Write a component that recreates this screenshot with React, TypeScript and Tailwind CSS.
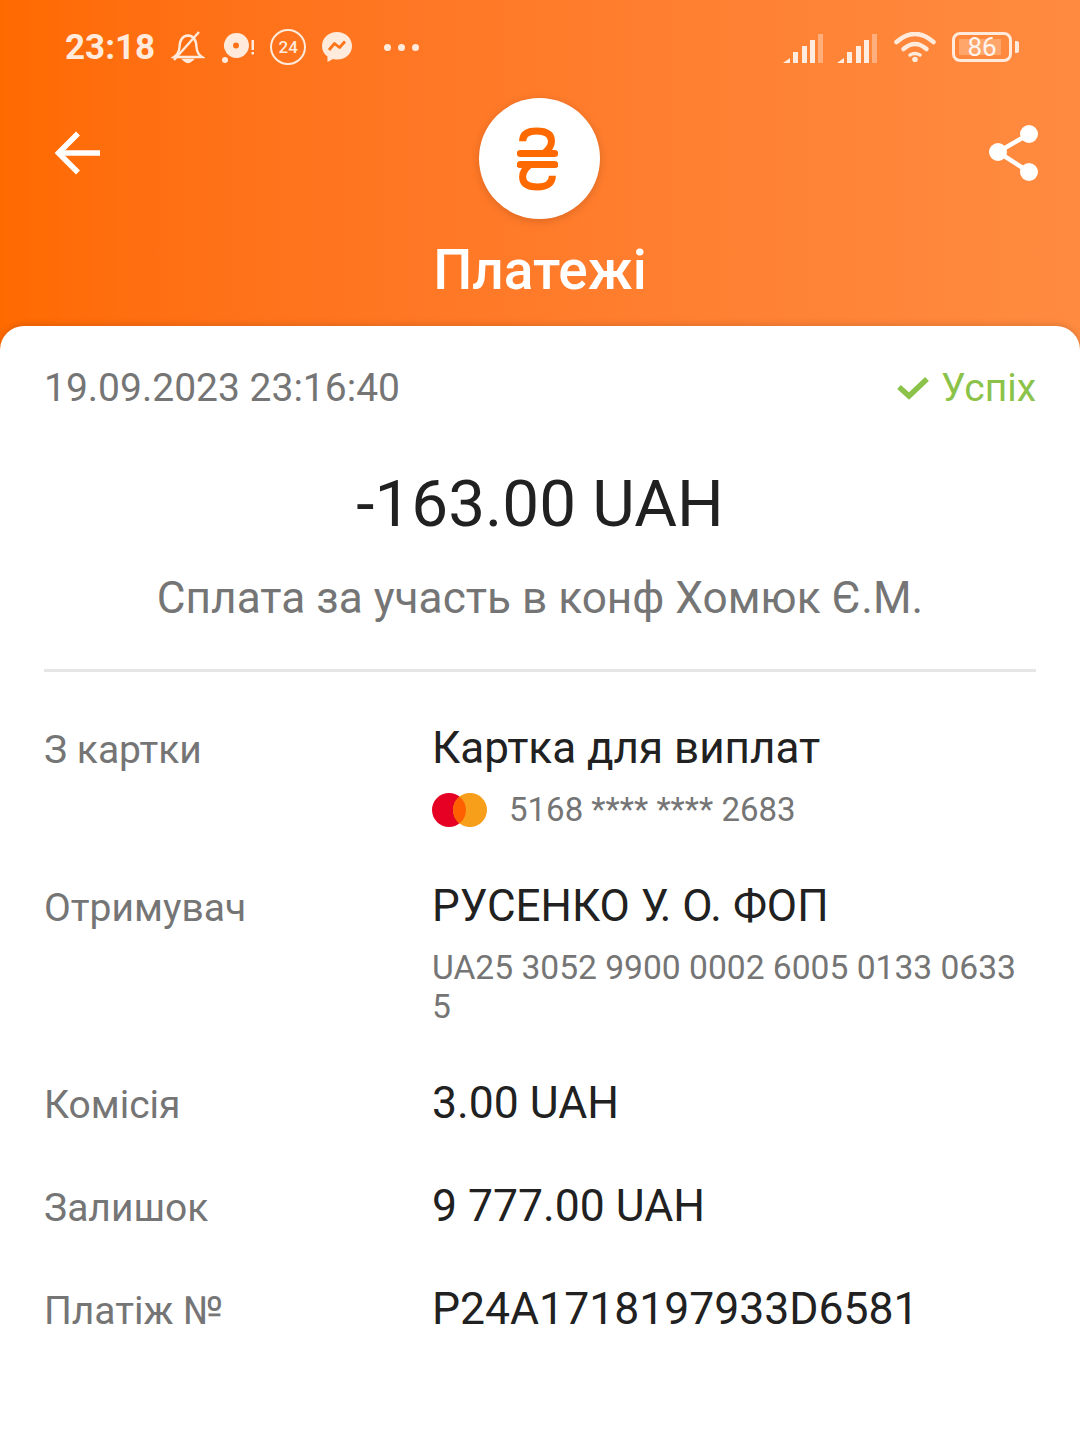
import React from "react";

const Bars = () => (
  <svg className="mt-[3px]" width="42" height="30" viewBox="0 0 42 30">
    <path d="M1 29 L8 24 V29 Z" fill="#fff" fillOpacity="0.85" />
    <rect x="11" y="18" width="5" height="11" fill="#fff" fillOpacity="0.85" />
    <rect x="20" y="12" width="5" height="17" fill="#fff" fillOpacity="0.85" />
    <rect x="28" y="6" width="5" height="23" fill="#fff" fillOpacity="0.85" />
    <rect x="36" y="0" width="5" height="29" fill="#fff" fillOpacity="0.35" />
  </svg>
);

const Row = ({ label, children, className = "" }: { label: string; children: React.ReactNode; className?: string }) => (
  <div className={`flex ${className}`}>
    <div className="w-[388px] shrink-0 text-[39px] leading-[46px] text-[#757575] pt-[4px]">{label}</div>
    <div className="flex-1 min-w-0">{children}</div>
  </div>
);

export default function App() {
  return (
    <div
      className="w-[1080px] h-[1442px] overflow-hidden bg-gradient-to-r from-[#ff6a00] to-[#ff8b40] flex flex-col"
      style={{ fontFamily: "Roboto, 'Noto Sans', sans-serif" }}
    >
      {/* status bar */}
      <div className="h-[94px] shrink-0 pl-[65px] pr-[61px] flex items-center text-[#ffeadb]">
        <span className="text-[35px] font-bold leading-none">23:18</span>
        <svg className="ml-[16px]" width="34" height="34" viewBox="0 0 34 34" fill="none" stroke="#ffeadb" strokeWidth="2.4">
          <path d="M3 27 Q8 24 8.5 17 Q9 6 17 5.5 Q25 6 25.5 17 Q26 24 31 27 Z" />
          <path d="M13 30 Q17 34 21 30 Z" fill="#ffeadb" />
          <path d="M3 30 L28 2" />
        </svg>
        <svg className="ml-[16px]" width="34" height="34" viewBox="0 0 34 34">
          <path fillRule="evenodd" fill="#ffeadb" d="M15 3 A12.5 12.5 0 1 1 5.5 23 A12.5 12.5 0 0 1 15 3 Z M15 12.5 A3 3 0 1 0 15.01 18.5 A3 3 0 0 0 15 12.5 Z" />
          <circle cx="4" cy="30" r="3" fill="#ffeadb" />
          <rect x="30.5" y="10" width="2.5" height="10" fill="#ffeadb" />
          <rect x="30.5" y="22" width="2.5" height="2.5" fill="#ffeadb" />
        </svg>
        <div className="ml-[15px] w-[36px] h-[36px] rounded-full border-[2.5px] border-[#ffeadb] flex items-center justify-center text-[17px] font-medium leading-none">24</div>
        <svg className="ml-[15px]" width="32" height="34" viewBox="0 0 32 34">
          <path fill="#ffeadb" d="M16 2 C7 2 1 8.5 1 16 C1 20.5 3 24 6.5 26.5 V32 L12 29 C13.5 29.5 14.5 29.6 16 29.6 C25 29.6 31 23.5 31 16 C31 8.5 25 2 16 2 Z" />
          <path fill="none" stroke="#ff7417" strokeWidth="2.8" strokeLinejoin="round" d="M8 20 L13.5 13.5 L18.5 17.5 L24 11.5" />
        </svg>
        <div className="ml-[31px] flex gap-[7px]">
          <span className="w-[7px] h-[7px] rounded-full bg-[#ffeadb]" />
          <span className="w-[7px] h-[7px] rounded-full bg-[#ffeadb]" />
          <span className="w-[7px] h-[7px] rounded-full bg-[#ffeadb]" />
        </div>
        <div className="flex-1" />
        <Bars />
        <div className="ml-[12px]"><Bars /></div>
        <svg className="ml-[16px]" width="42" height="30" viewBox="0 0 42 30" fill="none" stroke="#ffeadb" strokeWidth="4.5" strokeLinecap="round">
          <path d="M2.5 10 Q21 -6 39.5 10" />
          <path d="M9.5 17 Q21 7 32.5 17" />
          <path d="M16 23 Q21 20 26 23" strokeWidth="3.5" />
          <circle cx="21" cy="27.5" r="2.8" fill="#ffeadb" stroke="none" />
        </svg>
        <div className="ml-[16px] flex items-center">
          <div className="relative w-[60px] h-[30px] rounded-[8px] border-[3px] border-[#ffeadb] flex items-center p-[4px]">
            <div className="h-full w-[42px] bg-[#ffeadb]/30" />
            <span className="absolute inset-0 flex items-center justify-center text-[26px] leading-none text-[#fff5ee]">86</span>
          </div>
          <div className="ml-[3px] w-[4px] h-[12px] rounded-r-[2px] bg-[#ffeadb]" />
        </div>
      </div>

      {/* header */}
      <div className="relative h-[232px] shrink-0 flex flex-col items-center">
        <div className="w-[121px] h-[121px] mt-[4px] mr-[1px] rounded-full bg-white shadow-[0_2px_10px_rgba(0,0,0,0.15)] flex items-center justify-center">
          <svg className="mr-[4px]" width="41" height="66" viewBox="0 0 44 68" fill="none" stroke="#ff6a00" strokeWidth="7.5">
            <path d="M6 15 C6 7 12 4 21 4 C32 4 37 8 37 15 C37 20 34 24 29 28" />
            <path d="M38 52 C38 60 32 64 22 64 C11 64 6 60 6 53 C6 48 9 44 14 40" />
            <path d="M3.5 28 H40.5" strokeLinecap="round" />
            <path d="M3.5 40 H40.5" strokeLinecap="round" />
          </svg>
        </div>
        <div className="mt-[20px] text-[55px] leading-[62px] font-medium text-white">Платежі</div>
        <svg className="absolute left-[54px] top-[36px]" width="46" height="46" viewBox="0 0 46 46" fill="none" stroke="#fff" strokeWidth="5.5">
          <path d="M46 23 H5" />
          <path d="M24 3.5 L4.5 23 L24 42.5" />
        </svg>
        <svg className="absolute left-[988px] top-[30px]" width="52" height="58" viewBox="0 0 52 58" fill="#fff">
          <circle cx="41" cy="10" r="9" />
          <circle cx="10" cy="28" r="9" />
          <circle cx="41" cy="48" r="9" />
          <path d="M41 10 L10 28 L41 48" fill="none" stroke="#fff" strokeWidth="4.5" />
        </svg>
      </div>

      {/* card */}
      <div className="flex-1 rounded-t-[24px] bg-white px-[44px] shadow-[0_-2px_6px_rgba(0,0,0,0.12)]">
        <div className="flex items-center justify-between pt-[39px]">
          <span className="text-[39px] leading-[46px] text-[#757575]">19.09.2023 23:16:40</span>
          <span className="flex items-center text-[39px] leading-[46px] text-[#8bc34a]">
            <svg width="32" height="24" viewBox="0 0 32 24" fill="none" stroke="#8bc34a" strokeWidth="5.5">
              <path d="M2 11 L12 20 L30 3" />
            </svg>
            <span className="ml-[12px]">Успіх</span>
          </span>
        </div>
        <div className="mt-[55px] text-center text-[65.6px] leading-[76px] text-[#212121]">-163.00 UAH</div>
        <div className="mt-[31px] text-center text-[44.2px] leading-[50px] text-[#757575]">Сплата за участь в конф Хомюк Є.М.</div>
        <div className="mt-[46px] h-[3px] bg-[#e6e6e6]" />

        <Row label="З картки" className="mt-[51px]">
          <div className="text-[44px] leading-[50px] text-[#212121]">Картка для виплат</div>
          <div className="mt-[17px] flex items-center h-[40px]">
            <svg width="55" height="34" viewBox="0 0 55 34">
              <circle cx="17" cy="17" r="17" fill="#e60023" />
              <circle cx="38" cy="17" r="17" fill="#f79e1b" />
              <path d="M27.5 3.65 A17 17 0 0 1 27.5 30.35 A17 17 0 0 1 27.5 3.65 Z" fill="#ff5f00" />
            </svg>
            <span className="ml-[22px] text-[33px] leading-[40px] text-[#757575]">5168 **** **** 2683</span>
          </div>
        </Row>

        <Row label="Отримувач" className="mt-[51px]">
          <div className="text-[44px] leading-[50px] text-[#212121]">РУСЕНКО У. О. ФОП</div>
          <div className="mt-[17px] text-[33.6px] leading-[39px] text-[#757575]">UA25 3052 9900 0002 6005 0133 0633 5</div>
        </Row>

        <Row label="Комісія" className="mt-[52px]">
          <div className="text-[44.5px] leading-[50px] text-[#212121]">3.00 UAH</div>
        </Row>
        <Row label="Залишок" className="mt-[53px]">
          <div className="text-[44.5px] leading-[50px] text-[#212121]">9 777.00 UAH</div>
        </Row>
        <Row label="Платіж №" className="mt-[53px]">
          <div className="text-[44.5px] leading-[50px] text-[#212121]">P24A1718197933D6581</div>
        </Row>
      </div>
    </div>
  );
}
